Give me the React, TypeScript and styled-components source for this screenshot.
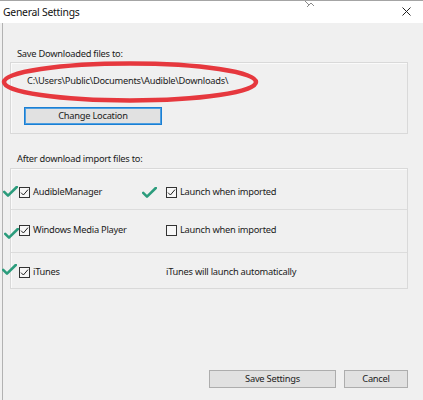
import React from "react";
import styled, { createGlobalStyle } from "styled-components";

const Global = createGlobalStyle`
  html, body { margin: 0; padding: 0; background: #f0f0f0; }
  * { box-sizing: border-box; }
`;

const FONT = `"Noto Sans", "Open Sans", sans-serif`;

const Window = styled.div`
  position: relative;
  width: 423px;
  height: 400px;
  background: #f0f0f0;
  border-top: 1px solid #a4a4a4;
  display: flex;
  flex-direction: column;
  font-family: ${FONT};
  font-size: 9.3px;
  letter-spacing: -0.25px;
  color: #1b1b1b;
  overflow: hidden;
`;

const TitleBar = styled.div`
  height: 22px;
  flex: none;
  background: #ffffff;
  display: flex;
  align-items: center;
  justify-content: space-between;
  padding: 0 12px 0 3px;
`;

const Title = styled.span`
  font-size: 10.4px;
  color: #111;
`;

const CloseIcon = styled.svg`
  width: 9px;
  height: 9px;
  margin-top: -1px;
`;

const Body = styled.div`
  flex: 1;
  margin-left: 2px;
  border-left: 1px solid #b2b2b2;
  padding: 0 15px 12px 7px;
  display: flex;
  flex-direction: column;
`;

const SectionLabel = styled.div<{ $top: number }>`
  margin-top: ${(p) => p.$top}px;
  padding-left: 7px;
  height: 16px;
  line-height: 16px;
`;

const GroupBox = styled.div`
  border: 1px solid #d9d9d9;
  box-shadow: inset 1px 1px 0 #fafafa;
`;

const PathBox = styled(GroupBox)`
  height: 72px;
  padding: 10px 0 8px 13px;
  display: flex;
  flex-direction: column;
`;

const PathText = styled.div`
  height: 16px;
  line-height: 16px;
  padding-left: 3px;
`;

const BaseButton = styled.button<{ $w: number; $focus?: boolean }>`
  width: ${(p) => p.$w}px;
  height: 18px;
  padding: 0;
  font-family: ${FONT};
  font-size: 9.3px;
  letter-spacing: -0.25px;
  color: #1b1b1b;
  background: #e1e1e1;
  border: 1px solid ${(p) => (p.$focus ? "#1a7fd4" : "#adadad")};
  box-shadow: ${(p) => (p.$focus ? "inset 0 0 0 1px #4f9fe0" : "none")};
  line-height: 16px;
  cursor: default;
`;

const ChangeButton = styled(BaseButton)`
  margin-top: 18px;
`;

const ImportBox = styled(GroupBox)`
  margin-top: 1px;
  display: flex;
  flex-direction: column;
`;

const Row = styled.div<{ $h: number; $pt: number; $first?: boolean }>`
  position: relative;
  height: ${(p) => p.$h}px;
  padding: ${(p) => p.$pt}px 0 0 8px;
  border-top: ${(p) => (p.$first ? "none" : "1px solid #dcdcdc")};
  display: grid;
  grid-template-columns: 147px 1fr;
  align-items: start;
`;

const Option = styled.label`
  display: flex;
  align-items: center;
  gap: 3px;
  height: 16px;
  line-height: 16px;
`;

const Box = styled.span`
  width: 11px;
  height: 11px;
  border: 1px solid #333;
  background: #f7f7f7;
  display: inline-flex;
  align-items: center;
  justify-content: center;
  flex: none;
`;

const Plain = styled.span`
  height: 16px;
  line-height: 16px;
`;

const Footer = styled.div`
  margin-top: auto;
  display: flex;
  justify-content: flex-end;
  gap: 8px;
`;

const Ellipse = styled.svg`
  position: absolute;
  left: 1px;
  top: 59px;
  width: 260px;
  height: 44px;
  pointer-events: none;
`;

const Tick = styled.svg<{ $x: number; $y: number }>`
  position: absolute;
  left: ${(p) => p.$x}px;
  top: ${(p) => p.$y}px;
  width: 15px;
  height: 11px;
  pointer-events: none;
`;

const Cursor = styled.svg`
  position: absolute;
  left: 302px;
  top: -1px;
  width: 14px;
  height: 7px;
`;

const Checkbox: React.FC<{ checked?: boolean }> = ({ checked }) => (
  <Box>
    {checked && (
      <svg width="9" height="9" viewBox="0 0 9 9">
        <path d="M1 4.6 L3.4 7 L8 1.6" fill="none" stroke="#222" strokeWidth="1" />
      </svg>
    )}
  </Box>
);

const GreenTick: React.FC<{ x: number; y: number }> = ({ x, y }) => (
  <Tick $x={x} $y={y} viewBox="0 0 15 11">
    <path d="M1.2 5.8 L5 9.6 L13.8 1" fill="none" stroke="#2b9c7c" strokeWidth="2.6" strokeLinecap="round" strokeLinejoin="round" />
  </Tick>
);

export default function App() {
  return (
    <>
      <Global />
      <Window>
        <TitleBar>
          <Title>General Settings</Title>
          <CloseIcon viewBox="0 0 9 9">
            <path d="M0.5 0.5 L8.5 8.5 M8.5 0.5 L0.5 8.5" stroke="#222" strokeWidth="1" />
          </CloseIcon>
        </TitleBar>
        <Body>
          <SectionLabel $top={23}>Save Downloaded files to:</SectionLabel>
          <PathBox>
            <PathText>C:\Users\Public\Documents\Audible\Downloads\</PathText>
            <ChangeButton $w={138} $focus>Change Location</ChangeButton>
          </PathBox>
          <SectionLabel $top={17}>After download import files to:</SectionLabel>
          <ImportBox>
            <Row $h={40} $pt={15} $first>
              <Option><Checkbox checked />AudibleManager</Option>
              <Option><Checkbox checked />Launch when imported</Option>
            </Row>
            <Row $h={43} $pt={12}>
              <Option><Checkbox checked />Windows Media Player</Option>
              <Option><Checkbox />Launch when imported</Option>
            </Row>
            <Row $h={36} $pt={11}>
              <Option><Checkbox checked />iTunes</Option>
              <Plain>iTunes will launch automatically</Plain>
            </Row>
          </ImportBox>
          <Footer>
            <BaseButton $w={127}>Save Settings</BaseButton>
            <BaseButton $w={64}>Cancel</BaseButton>
          </Footer>
        </Body>

        <Ellipse viewBox="0 0 260 44">
          <ellipse cx="129" cy="22" rx="126" ry="18.5" fill="none" stroke="#e6383e" strokeWidth="4.5" />
        </Ellipse>
        <GreenTick x={3} y={185} />
        <GreenTick x={142} y={186} />
        <GreenTick x={4} y={227} />
        <GreenTick x={2} y={263} />
        <Cursor viewBox="0 0 14 7">
          <path d="M2 0 L7 5 L9 3 L12 6 M7 5 L5 7" fill="none" stroke="#8a8a8a" strokeWidth="1" />
        </Cursor>
      </Window>
    </>
  );
}
